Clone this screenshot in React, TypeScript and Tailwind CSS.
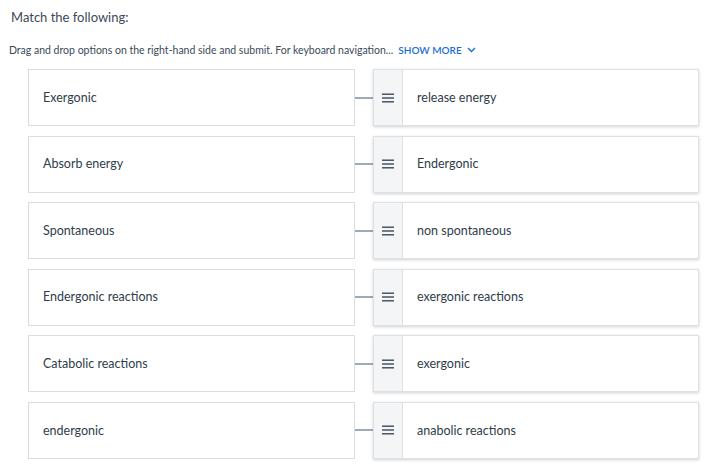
import { useState } from 'react'

const PAIRS: [string, string][] = [
  ['Exergonic', 'release energy'],
  ['Absorb energy', 'Endergonic'],
  ['Spontaneous', 'non spontaneous'],
  ['Endergonic reactions', 'exergonic reactions'],
  ['Catabolic reactions', 'exergonic'],
  ['endergonic', 'anabolic reactions'],
]

function Handle() {
  return (
    <svg width="12" height="10" viewBox="0 0 12 10" className="text-[#3d4b58]">
      <rect x="0" y="0.5" width="12" height="1.4" fill="currentColor" />
      <rect x="0" y="4.3" width="12" height="1.4" fill="currentColor" />
      <rect x="0" y="8.1" width="12" height="1.4" fill="currentColor" />
    </svg>
  )
}

export default function App() {
  const [open, setOpen] = useState(false)
  return (
    <div className="h-[473px] w-[705px] overflow-hidden bg-white font-['Lato','Liberation_Sans',sans-serif] text-[#2f3d4a]">
      <div className="pl-[11px] pt-[9px] text-[13px] leading-[16px] text-[#3b4a57]">Match the following:</div>
      <div className="mt-[18px] flex items-center pl-[9px] text-[10.5px] leading-[14px] text-[#3b4a57]">
        <span>Drag and drop options on the right-hand side and submit. For keyboard navigation...</span>
        <button
          onClick={() => setOpen((v) => !v)}
          className="ml-[5px] flex items-center gap-[5px] text-[10px] font-semibold text-[#1f6fd1]"
        >
          SHOW MORE
          <svg width="9" height="6" viewBox="0 0 9 6" className={open ? 'rotate-180' : ''}>
            <path d="M1 1l3.5 3.5L8 1" fill="none" stroke="currentColor" strokeWidth="1.4" />
          </svg>
        </button>
      </div>
      <div className="mt-[12px] flex flex-col gap-[9.6px] pl-[28px]">
        {PAIRS.map(([l, r]) => (
          <div key={l} className="flex h-[57px] items-center">
            <div className="flex h-full w-[327px] items-center border border-[#d9dee3] pl-[14px] pt-px text-[12.5px]">
              {l}
            </div>
            <div className="h-[2px] w-[18px] bg-[#9eabb7]" />
            <div className="flex h-full w-[326px] border border-[#dde1e5] shadow-[0_1px_3px_rgba(0,0,0,0.18)]">
              <div className="flex w-[29px] items-center justify-center border-r border-[#dde1e5] bg-[#f4f5f7]">
                <Handle />
              </div>
              <div className="flex items-center pl-[14px] pt-px text-[12.5px]">{r}</div>
            </div>
          </div>
        ))}
      </div>
    </div>
  )
}
